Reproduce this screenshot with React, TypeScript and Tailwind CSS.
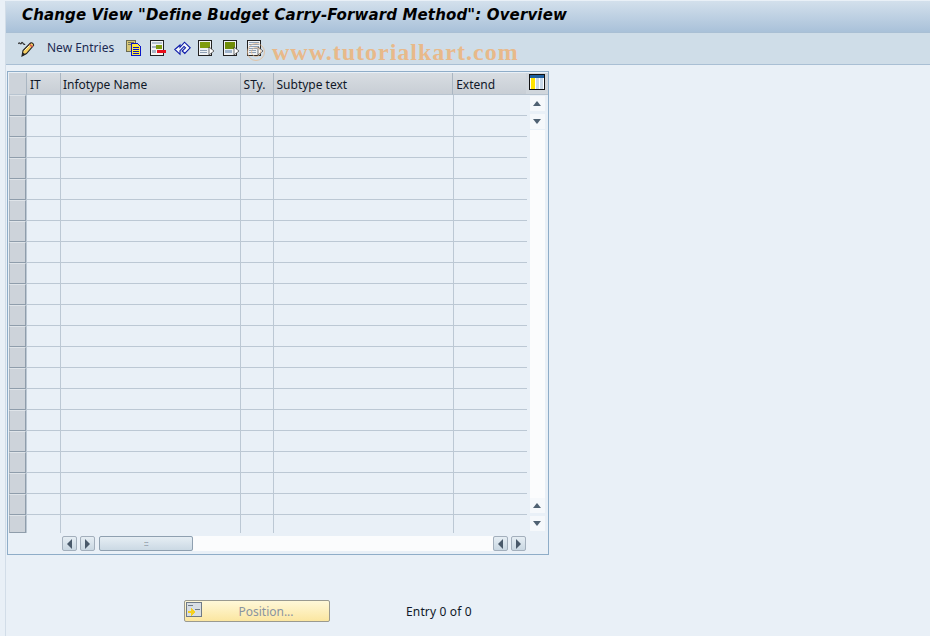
import type { FC, ReactNode } from "react";

const columns = [
  { label: "IT", width: "w-[34px]", pad: "pl-[3px]" },
  { label: "Infotype Name", width: "w-[180px]", pad: "pl-[2px]" },
  { label: "STy.", width: "w-[33px]", pad: "pl-[3px]" },
  { label: "Subtype text", width: "w-[180px]", pad: "pl-[3px]" },
  { label: "Extend", width: "w-[74px]", pad: "pl-[3px]" },
];

const rows = Array.from({ length: 21 }, (_, i) => i);

const Icon: FC<{ children: ReactNode; className?: string }> = ({ children, className }) => (
  <svg width="16" height="16" viewBox="0 0 16 16" shapeRendering="crispEdges" className={className}>
    {children}
  </svg>
);

const PencilIcon = () => (
  <svg width="17" height="16" viewBox="0 0 17 16">
    <path d="M.5 3 C1.5 0 2.5 4.5 3.5 2 C4.5 0 5.5 4.5 7 3" fill="none" stroke="#333" strokeWidth="1.2" />
    <path d="M4 15 L5 9.5 L12.5 2 C14 1 16 3 15.5 4.5 L8.5 12.5 Z" fill="#f6cf62" stroke="#222" strokeWidth="1.1" />
    <path d="M4 15 L4.8 11.5 L7.5 13.3 Z" fill="#222" />
    <path d="M11.5 3.5 L14.5 6" stroke="#d9534f" strokeWidth="1.6" />
    <path d="M6.5 9.5 L11.5 4.5" stroke="#fff3c4" strokeWidth="1" />
  </svg>
);

const CopyIcon = () => (
  <Icon>
    <path d="M.5 .5H9.5V11.5H.5Z" fill="#d8c878" stroke="#6b6b50" />
    <path d="M2 2H8V3H2ZM2 4H5V5H2Z" fill="#77775a" />
    <path d="M5.5 3.5H11.5L14.5 6.5V15.5H5.5Z" fill="#ffe93a" stroke="#0b18c8" />
    <path d="M7 7H13V8H7ZM7 9H13V10H7ZM7 11H13V12H7ZM7 13H13V14H7Z" fill="#0b18c8" />
  </Icon>
);

const DeleteIcon = () => (
  <Icon>
    <path d="M.5 .5H13.5V15.5H.5Z" fill="#f5f5f5" stroke="#222" />
    <path d="M2 2H12V4H2Z" fill="#b8c4d0" />
    <path d="M6 5H12V9H6Z" fill="#7f9c10" />
    <path d="M2 6H6V8H2ZM2 10H6V13H2Z" fill="#a8b4c4" />
    <path d="M7 10H16V13H7Z" fill="#e8101c" />
  </Icon>
);

const UndoIcon = () => (
  <svg width="17" height="16" viewBox="0 0 17 16">
    <path
      d="M.8 9.5 L6 5 V7.3 L10.5 2.2 L16.2 7.8 L10.8 13.5 L8.2 11 L11.5 7.8 L10 6.4 L6 10.6 V14.3 Z"
      fill="#f4f7fb"
      stroke="#0a18a8"
      strokeWidth="1.1"
    />
  </svg>
);

const SelectIcon: FC<{ tone: "top" | "all" | "none" }> = ({ tone }) => (
  <Icon>
    <path d="M.5 .5H13.5V15.5H.5Z" fill="#eef1f4" stroke="#222" />
    {tone === "top" && <path d="M2 2H12V8H2Z" fill="#7f9c10" />}
    {tone === "top" && <path d="M2 10H9V11H2ZM2 12H9V13H2Z" fill="#8fa0b4" />}
    {tone === "all" && <path d="M2 2H12V9H2Z" fill="#6f8c08" />}
    {tone === "all" && <path d="M2 10H9V13H2Z" fill="#9fb4cc" />}
    {tone === "none" && <path d="M2 2H12V3H2ZM2 4H12V5H2ZM2 6H12V7H2ZM2 8H10V9H2ZM2 10H9V11H2ZM2 12H9V13H2Z" fill="#8fa0b4" />}
    <path d="M11 7V15L16 11Z" fill="#fff" stroke="#333" strokeWidth=".7" shapeRendering="auto" />
  </Icon>
);

const ConfigIcon = () => (
  <Icon>
    <path d="M.5 .5H15.5V15.5H.5Z" fill="#fff" stroke="#111" />
    <path d="M1 1H15V4H1Z" fill="#1f5f9f" />
    <path d="M2 4H6V15H2Z" fill="#ffe400" />
    <path d="M7 4H10V15H7ZM11 4H14V15H11Z" fill="#c8d8e8" />
  </Icon>
);

const ArrowBtn: FC<{ dir: "left" | "right" }> = ({ dir }) => (
  <div className="flex h-[15px] w-[15px] items-center justify-center rounded-[2px] border border-[#a3afbc] bg-gradient-to-b from-[#e6eef4] to-[#c9d7e2]">
    <div
      className={
        dir === "left"
          ? "border-y-[5px] border-r-[5px] border-y-transparent border-r-[#49596a]"
          : "border-y-[5px] border-l-[5px] border-y-transparent border-l-[#49596a]"
      }
    />
  </div>
);

const VArrow: FC<{ dir: "up" | "down" }> = ({ dir }) => (
  <div className="flex h-[15px] w-[15px] items-center justify-center bg-[#f5f8fb]">
    <div
      className={
        dir === "up"
          ? "border-x-[4px] border-b-[5px] border-x-transparent border-b-[#4f6172]"
          : "border-x-[4px] border-t-[5px] border-x-transparent border-t-[#4f6172]"
      }
    />
  </div>
);

export default function App() {
  return (
    <div className="relative h-[636px] w-[930px] overflow-hidden bg-[#e9f0f7] pl-[5px] pt-px font-['Noto_Sans',sans-serif] text-[12px] text-[#101828]">
      <div className="flex h-full flex-col border-l border-l-[#d2dde8]">
        <div className="flex h-[31px] items-center bg-gradient-to-b from-[#d3e0ec] to-[#a9c1d9] pb-[3px] pl-4 font-['DejaVu_Sans',sans-serif] text-[15px] font-bold italic tracking-[0.14px] text-black">
          Change View "Define Budget Carry-Forward Method": Overview
        </div>
        <div className="relative flex h-[33px] items-center border-y border-y-[#a9bfd4] bg-[#cfdde8] pl-[12px]">
          <PencilIcon />
          <span className="ml-[12px] -translate-y-px text-[#1c2a52]">New Entries</span>
          <div className="ml-[12px] flex -translate-y-px items-center gap-[8px]">
            <CopyIcon />
            <DeleteIcon />
            <UndoIcon />
            <div className="-ml-px">
              <SelectIcon tone="top" />
            </div>
            <div className="ml-px">
              <SelectIcon tone="all" />
            </div>
            <SelectIcon tone="none" />
          </div>
          <div className="absolute left-[241px] top-[10px] flex h-[18px] w-[18px] items-center justify-center rounded-full border border-[#e9b98a] opacity-70">
            <div className="h-[10px] w-[10px] rounded-full border border-[#e9b98a]" />
          </div>
          <span className="absolute left-[266px] top-[5px] font-['Liberation_Serif',serif] text-[24px] font-bold leading-[28px] tracking-[1px] text-[#e8b98a]">
            www.tutorialkart.com
          </span>
        </div>

        <div className="ml-px mt-[6px] h-[484px] w-[542px] border border-[#8fadc8] pl-px pt-px">
          <div className="flex h-[22px]">
            <div className="w-[17px] border-b border-b-[#b8c4d0] bg-[#cdd3da]" />
            {columns.map((c) => (
              <div
                key={c.label}
                className={`${c.width} ${c.pad} flex items-center border-b border-l border-b-[#b8c4d0] border-l-[#aab6c2] bg-gradient-to-b from-[#d8dde2] to-[#c8ced5] pt-[2px]`}
              >
                {c.label}
              </div>
            ))}
            <div className="w-[22px] border-b border-b-[#b8c4d0] bg-[#d0d6dc] pl-[3px] pt-px">
              <ConfigIcon />
            </div>
          </div>
          <div className="flex h-[438px] overflow-hidden">
            <div className="flex w-[17px] flex-col">
              {rows.map((r) => (
                <div
                  key={r}
                  className={`${r === 20 ? "h-[18px]" : "h-[21px]"} w-[17px] shrink-0 border border-[#8f9dab] border-l-[#a8b3be] border-t-[#dfe4e9] bg-[#cdd3da]`}
                />
              ))}
            </div>
            <div className="w-[501px]">
              {rows.map((r) => (
                <div key={r} className="flex h-[21px]">
                  {columns.map((c) => (
                    <div key={c.label} className={`${c.width} border-b border-l border-[#bcc8d4]`} />
                  ))}
                </div>
              ))}
            </div>
            <div className="flex w-[22px] flex-col items-center pb-[2px] pr-px pt-px">
              <VArrow dir="up" />
              <div className="mt-[3px]">
                <VArrow dir="down" />
              </div>
              <div className="mt-px w-[15px] flex-1 bg-[#fbfcfd]" />
              <VArrow dir="up" />
              <div className="mt-[3px]">
                <VArrow dir="down" />
              </div>
            </div>
          </div>
          <div className="flex h-[21px] items-center pl-[53px]">
            <ArrowBtn dir="left" />
            <div className="ml-[3px]">
              <ArrowBtn dir="right" />
            </div>
            <div className="ml-[4px] flex h-[15px] w-[94px] items-center justify-center rounded-[2px] border border-[#8fa0b0] bg-gradient-to-b from-[#e6eef4] to-[#cbd9e4] text-[7px] leading-none tracking-[-0.5px] text-[#7a8894]">
              :::
            </div>
            <div className="h-[15px] w-[300px] bg-[#fbfcfd]" />
            <ArrowBtn dir="left" />
            <div className="ml-[3px]">
              <ArrowBtn dir="right" />
            </div>
          </div>
        </div>

        <div className="ml-[178px] mt-[45px] flex items-center">
          <div className="relative flex h-[22px] w-[146px] items-center justify-center rounded-[2px] border border-[#9a9a90] bg-gradient-to-b from-[#fff8d8] to-[#fbe6a0] pl-[18px] pt-px text-[#8a94a0]">
            <svg width="16" height="16" viewBox="0 0 16 16" className="absolute left-[1px] top-[1px]" shapeRendering="crispEdges">
              <path d="M.5 .5H15.5V14.5H.5Z" fill="#d8dee4" stroke="#6f7a86" />
              <path d="M9 7H14V8H9Z" fill="#6f7a86" />
              <path d="M2 3H7V4H2Z" fill="#6f7a86" />
              <path d="M2 9H5V6L9 10L5 14V11H2Z" fill="#f5d020" />
            </svg>
            Position...
          </div>
          <span className="ml-[76px] pt-px tracking-[0.15px] text-[#101828]">Entry 0 of 0</span>
        </div>
      </div>
    </div>
  );
}
